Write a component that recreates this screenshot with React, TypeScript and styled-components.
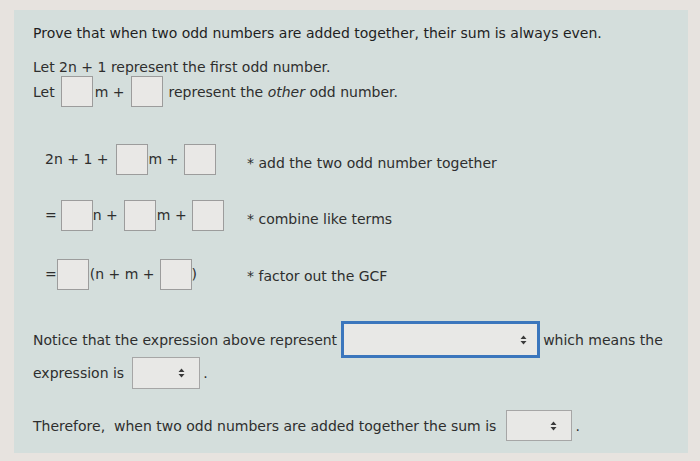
import React from 'react'
import styled, { createGlobalStyle } from 'styled-components'

const GlobalStyle = createGlobalStyle`
  html, body {
    margin: 0;
    padding: 0;
    background: #e7e3df;
  }
  body {
    font-family: "DejaVu Sans", Verdana, sans-serif;
  }
`

const Page = styled.div`
  width: 700px;
  height: 461px;
  padding: 10px 0 0 14px;
  box-sizing: border-box;
  background: #e7e3df;
`

const Panel = styled.div`
  width: 674px;
  height: 443px;
  box-sizing: border-box;
  padding: 14px 0 0 19px;
  background: #d4dedc;
  color: #2e2e2e;
  font-size: 14px;
  display: flex;
  flex-direction: column;
`

const Line = styled.div<{ $top?: number; $h?: number }>`
  display: flex;
  align-items: center;
  height: ${(p) => p.$h ?? 18}px;
  margin-top: ${(p) => p.$top ?? 0}px;
  white-space: pre;
`

const Title = styled(Line)`
  color: #1f1f1f;
`

const EqRow = styled.div<{ $top: number }>`
  display: grid;
  grid-template-columns: 202px auto;
  align-items: center;
  height: 32px;
  margin-top: ${(p) => p.$top}px;
  padding-left: 12px;
  white-space: pre;
`

const Expr = styled.div`
  display: flex;
  align-items: center;
`

const Comment = styled.span<{ $drop?: number }>`
  padding-top: ${(p) => p.$drop ?? 0}px;
`

const Box = styled.span<{ $l?: number; $r?: number }>`
  display: inline-block;
  width: 32px;
  height: 31px;
  box-sizing: border-box;
  margin: 0 ${(p) => p.$r ?? 2}px 0 ${(p) => p.$l ?? 4}px;
  background: #e9e8e6;
  border: 1px solid #9c9c9c;
`

const Select = styled.span<{ $w: number; $h: number; $focus?: boolean; $l?: number }>`
  display: inline-flex;
  align-items: center;
  justify-content: flex-end;
  width: ${(p) => p.$w}px;
  height: ${(p) => p.$h}px;
  box-sizing: border-box;
  margin: 0 3px 0 ${(p) => p.$l ?? 5}px;
  padding-right: ${(p) => (p.$focus ? 10 : 14)}px;
  background: #e8e8e6;
  border: ${(p) => (p.$focus ? '3px solid #3b76bd' : '1px solid #a6a6a6')};
`

const Arrows = () => (
  <svg width="7" height="10" viewBox="0 0 7 10">
    <path d="M3.5 0.5 L6.5 4 H0.5 Z M3.5 9.5 L6.5 6 H0.5 Z" fill="#3a3a3a" />
  </svg>
)

const App: React.FC = () => (
  <>
    <GlobalStyle />
    <Page>
      <Panel>
        <Title>Prove that when two odd numbers are added together, their sum is always even.</Title>

        <Line $top={16}>Let 2n + 1 represent the first odd number.</Line>
        <Line $h={31}>
          Let<Box $l={6} $r={2} />m +<Box $l={7} $r={5} />represent the <em>other</em> odd number.
        </Line>

        <EqRow $top={36}>
          <Expr>
            2n + 1 +<Box $l={7} $r={1} />m +<Box $l={6} />
          </Expr>
          <Comment $drop={8}>* add the two odd number together</Comment>
        </EqRow>

        <EqRow $top={24}>
          <Expr>
            =<Box $l={4} $r={0} />n +<Box $l={6} $r={1} />m +<Box $l={5} />
          </Expr>
          <Comment $drop={8}>* combine like terms</Comment>
        </EqRow>

        <EqRow $top={27}>
          <Expr>
            =<Box $l={0} $r={1} />(n + m +<Box $l={5} $r={0} />)
          </Expr>
          <Comment $drop={4}>* factor out the GCF</Comment>
        </EqRow>

        <Line $top={31} $h={37}>
          Notice that the expression above represent
          <Select $w={199} $h={37} $focus $l={4}>
            <Arrows />
          </Select>
          which means the
        </Line>
        <Line $top={-1} $h={32}>
          expression is
          <Select $w={68} $h={32} $l={8}>
            <Arrows />
          </Select>
          .
        </Line>

        <Line $top={21} $h={31}>
          Therefore,  when two odd numbers are added together the sum is
          <Select $w={66} $h={31} $l={10}>
            <Arrows />
          </Select>
          .
        </Line>
      </Panel>
    </Page>
  </>
)

export default App
